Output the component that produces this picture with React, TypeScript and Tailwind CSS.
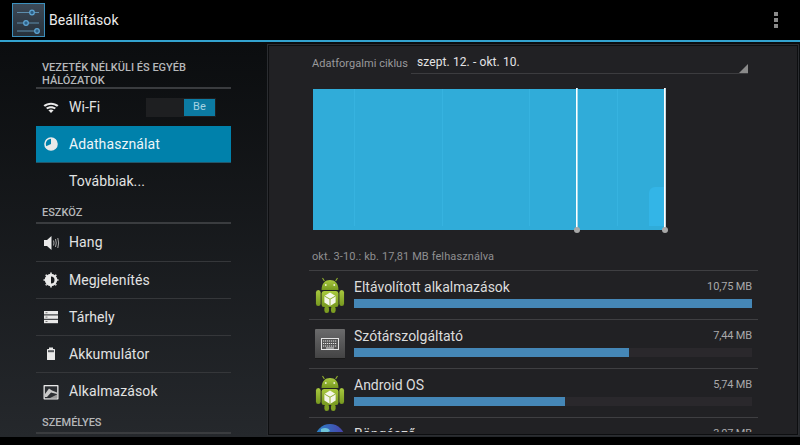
import React from "react";

function Android() {
  return (
    <svg width="30" height="36" viewBox="0 0 32 36" preserveAspectRatio="none" className="shrink-0">
      <defs>
        <linearGradient id="ag" x1="0" y1="0" x2="0" y2="1">
          <stop offset="0" stopColor="#a9c93f" />
          <stop offset="1" stopColor="#76981f" />
        </linearGradient>
      </defs>
      <path d="M10 4 L8 1 M22 4 L24 1" stroke="#8fae2e" strokeWidth="1.2" />
      <path d="M7 13 C7 6 11 3 16 3 C21 3 25 6 25 13 Z" fill="url(#ag)" />
      <circle cx="11.5" cy="8" r="1" fill="#e8efd0" />
      <circle cx="20.5" cy="8" r="1" fill="#e8efd0" />
      <rect x="7" y="14" width="18" height="16" rx="2.5" fill="url(#ag)" />
      <rect x="1" y="13" width="5" height="16" rx="2.5" fill="url(#ag)" />
      <rect x="26" y="13" width="5" height="16" rx="2.5" fill="url(#ag)" />
      <rect x="10" y="29" width="5" height="7" rx="2.5" fill="#7d9e22" />
      <rect x="17" y="29" width="5" height="7" rx="2.5" fill="#7d9e22" />
      <path d="M16 15.5 L22 19 V25.5 L16 29 L10 25.5 V19 Z" fill="#f4f6ea" />
      <path d="M10 19 L16 22.2 L22 19 M16 22.2 V29" stroke="#8fae2e" strokeWidth="1" fill="none" />
    </svg>
  );
}

function KeyboardIcon() {
  return (
    <svg width="30" height="30" viewBox="0 0 30 30" className="mt-[3px] shrink-0">
      <defs>
        <linearGradient id="kg" x1="0" y1="0" x2="0" y2="1">
          <stop offset="0" stopColor="#6b6b6c" />
          <stop offset="1" stopColor="#424243" />
        </linearGradient>
      </defs>
      <rect x="0" y="0" width="30" height="30" rx="1" fill="url(#kg)" />
      <rect x="0" y="29" width="30" height="1" fill="#1a1a1a" />
      <rect x="6.5" y="9.5" width="17" height="11" fill="#555" stroke="#e4e4e4" />
      <path d="M8 12h14M8 14.5h14M8 17h14" stroke="#e4e4e4" strokeWidth="1.2" strokeDasharray="1.2 .8" />
      <path d="M11 19h8" stroke="#e4e4e4" strokeWidth="1" />
    </svg>
  );
}

function Globe() {
  return (
    <svg width="30" height="30" viewBox="0 0 30 30" className="shrink-0">
      <defs>
        <linearGradient id="gg" x1="0" y1="0" x2="1" y2="0">
          <stop offset="0" stopColor="#2a86c9" />
          <stop offset="1" stopColor="#4a3fa8" />
        </linearGradient>
      </defs>
      <circle cx="15" cy="15" r="15" fill="url(#gg)" />
      <path d="M6 5 C10 3 14 4 15 7 C12 9 9 8 6 9 Z" fill="#6fc3d8" />
    </svg>
  );
}

const ICON = "#e9e9e9";
const icons: Record<string, React.ReactNode> = {
  wifi: (
    <svg width="16" height="16" viewBox="0 0 16 16">
      <path d="M0.5 5.2 C4.5 1.8 11.5 1.8 15.5 5.2 L14 6.8 C10.5 4 5.5 4 2 6.8 Z" fill={ICON} />
      <path d="M3 7.8 C6 5.6 10 5.6 13 7.8 L11.6 9.3 C9.4 7.8 6.6 7.8 4.4 9.3 Z" fill={ICON} />
      <path d="M5.4 10.3 C7 9.2 9 9.2 10.6 10.3 L8 13 Z" fill={ICON} />
    </svg>
  ),
  pie: (
    <svg width="16" height="16" viewBox="0 0 16 16">
      <circle cx="8" cy="8" r="6" fill="none" stroke={ICON} strokeWidth="1.6" />
      <path d="M8 8 L8 2 A6 6 0 1 1 2.6 10.6 Z" fill={ICON} />
    </svg>
  ),
  sound: (
    <svg width="17" height="16" viewBox="0 0 16 16">
      <path d="M0.5 5 H3.5 L8 1 V15 L3.5 11 H0.5 Z" fill={ICON} />
      <path d="M10 5.5 Q11 8 10 10.5 M12 4 Q13.5 8 12 12 M14.3 3 Q16 8 14.3 13" stroke="#aaa" strokeWidth="1" fill="none" />
    </svg>
  ),
  sun: (
    <svg width="16" height="16" viewBox="0 0 16 16">
      <circle cx="8" cy="8" r="6.2" fill={ICON} />
      <path d="M8 4.5 A3.5 3.5 0 0 1 8 11.5 Z" fill="#1a1c1f" />
      <path d="M8 0.5V15.5M.5 8H15.5M2.7 2.7L13.3 13.3M13.3 2.7L2.7 13.3" stroke={ICON} strokeWidth="1.6" strokeDasharray="1.6 12" />
    </svg>
  ),
  storage: (
    <svg width="16" height="16" viewBox="0 0 16 16">
      <rect x="1" y="2" width="14" height="3.4" fill={ICON} />
      <rect x="1" y="6.4" width="14" height="3.4" fill={ICON} />
      <rect x="1" y="10.8" width="14" height="3.4" fill={ICON} />
      <path d="M2.5 3.7h2M2.5 8.1h2M2.5 12.5h2" stroke="#777" strokeWidth="1" />
    </svg>
  ),
  battery: (
    <svg width="16" height="16" viewBox="0 0 16 16">
      <rect x="6" y="1.5" width="4" height="2" fill={ICON} />
      <rect x="4" y="3" width="8" height="11" rx="0.6" fill={ICON} />
      <rect x="5" y="4.2" width="6" height="2" fill="#55585c" />
    </svg>
  ),
  image: (
    <svg width="16" height="16" viewBox="0 0 16 16">
      <rect x="0.5" y="1" width="15" height="14.5" rx="0.8" fill={ICON} />
      <rect x="1.8" y="2.3" width="12.4" height="12" fill="#2b2e32" />
      <path d="M2 10 L6 4.5 L9 6.5 L14 8.5 V10 L8 8.5 L4 13 H2 Z" fill="#c9c9c9" />
      <path d="M7 14 L14 10.5 V14 Z" fill="#9a9a9a" />
    </svg>
  ),
};

function Section({ lines, h, pb }: { lines: string[]; h: string; pb: string }) {
  return (
    <div className={`${h} ${pb} flex flex-col justify-end border-b-2 border-[#3a3c3f] px-[6px] text-[11px] leading-[13px] font-medium whitespace-nowrap text-[#b6b8ba]`}>
      {lines.map((l) => (
        <div key={l}>{l}</div>
      ))}
    </div>
  );
}

function Row({ icon, label, h, active, line, children }: { icon?: string; label: string; h: string; active?: boolean; line?: boolean; children?: React.ReactNode }) {
  return (
    <div className={`${h} flex items-center whitespace-nowrap pl-[7px] text-[14px] tracking-[0.1px] ${active ? "bg-[#0081ab] text-[#eef6f9] border-b border-[#23566a]" : "text-[#e2e3e3]"} ${line ? "border-b border-[#35373a]" : ""}`}>
      <div className="flex w-[26px] shrink-0 items-center">{icon ? icons[icon] : null}</div>
      <span>{label}</span>
      {children}
    </div>
  );
}

function AppRow({ icon, name, size, pct }: { icon: React.ReactNode; name: string; size: string; pct: number }) {
  return (
    <div className="flex h-[49px] border-t border-[#3f3f42] px-[6px]">
      <div className="flex w-[39px] shrink-0 items-start pt-[6px]">{icon}</div>
      <div className="flex-1 pt-[6px]">
        <div className="flex h-[21px] items-center justify-between">
          <span className="text-[14px] text-[#dcdcdc]">{name}</span>
          <span className="text-[11px] tracking-[-0.15px] text-[#a9a9aa]">{size}</span>
        </div>
        <div className="mt-[1px] h-[9px] bg-[#2a282c]">
          <div className="h-full bg-[#4587b7]" style={{ width: `${pct}%` }} />
        </div>
      </div>
    </div>
  );
}

function Chart() {
  return (
    <div className="relative ml-[44px] h-[141px] w-[352px] bg-[#30acd9]">
      <div className="absolute left-[41px] top-0 h-[137px] w-px bg-[#36b3e0]" />
      <div className="absolute left-[129px] top-0 h-[137px] w-px bg-[#36b3e0]" />
      <div className="absolute left-[216px] top-0 h-[137px] w-px bg-[#36b3e0]" />
      <div className="absolute left-[304px] top-0 h-[137px] w-px bg-[#36b3e0]" />
      <div className="absolute bottom-[4px] left-[336px] h-[39px] w-[15px] rounded-tl-[6px] bg-[#33b5e7]" />
      <div className="absolute left-[263px] top-[-1px] h-[142px] w-[2px] border-l border-l-white bg-[#a8dcee]" />
      <div className="absolute left-[351px] top-[-1px] h-[142px] w-[2px] border-l border-l-white bg-[#c8d8de]" />
      <div className="absolute left-[261px] top-[138px] h-[6px] w-[6px] rounded-full bg-[#a8a8a8]" />
      <div className="absolute left-[349px] top-[138px] h-[6px] w-[6px] rounded-full bg-[#a8a8a8]" />
    </div>
  );
}

export default function App() {
  return (
    <div className="flex h-[445px] w-[800px] flex-col overflow-hidden bg-black font-['Roboto',sans-serif]">
      <header className="flex h-[40px] shrink-0 items-center justify-between pl-[12px] pr-[22px]">
        <div className="flex items-center">
          <svg width="33" height="34" viewBox="0 0 33 34">
            <defs>
              <linearGradient id="hg" x1="0" y1="0" x2="0" y2="1">
                <stop offset="0" stopColor="#3d4a58" />
                <stop offset="1" stopColor="#26303a" />
              </linearGradient>
            </defs>
            <rect x="0.5" y="0.5" width="32" height="33" fill="url(#hg)" stroke="#3c8fbc" />
            <path d="M5 10.5H27M5 21H27M5 29H27" stroke="#5d8dac" strokeWidth="1" transform="translate(0,-1)" />
            <circle cx="20" cy="9.5" r="2.3" fill="#2d5f86" stroke="#5fa6d4" strokeWidth="1.2" />
            <circle cx="14" cy="20" r="2.3" fill="#2d5f86" stroke="#5fa6d4" strokeWidth="1.2" />
            <circle cx="25" cy="28" r="2.3" fill="#2d5f86" stroke="#5fa6d4" strokeWidth="1.2" />
          </svg>
          <span className="ml-[4px] text-[14px] tracking-[0.1px] text-[#ececec]">Beállítások</span>
        </div>
        <div className="flex flex-col gap-[2px]">
          <div className="h-[4px] w-[4px] bg-[#8a8a8a]" />
          <div className="h-[4px] w-[4px] bg-[#8a8a8a]" />
          <div className="h-[4px] w-[4px] bg-[#8a8a8a]" />
        </div>
      </header>
      <div className="h-[2px] shrink-0 bg-[#33a3cf]" />
      <main className="flex h-[395px] shrink-0 bg-gradient-to-b from-[#0b0d0f] to-[#25282c]">
        <aside className="h-full w-[267px] shrink-0 overflow-hidden px-[36px]">
          <Section h="h-[47px]" pb="pb-0" lines={["VEZETÉK NÉLKÜLI ÉS EGYÉB", "HÁLÓZATOK"]} />
          <Row icon="wifi" label="Wi-Fi" h="h-[37px]">
            <div className="ml-auto mr-[15px] flex h-[19px] w-[70px] items-stretch bg-[#1e1f21] p-[1px]">
              <div className="flex-1" />
              <div className="flex w-[31px] items-center justify-center bg-[#0c7ba3] text-[11px] text-[#a7d3e2]">Be</div>
            </div>
          </Row>
          <Row icon="pie" label="Adathasználat" h="h-[37px]" active />
          <Row label="Továbbiak..." h="h-[37px]" />
          <Section h="h-[24px]" pb="pb-[3px]" lines={["ESZKÖZ"]} />
          <Row icon="sound" label="Hang" h="h-[38px]" line />
          <Row icon="sun" label="Megjelenítés" h="h-[37px]" line />
          <Row icon="storage" label="Tárhely" h="h-[37px]" line />
          <Row icon="battery" label="Akkumulátor" h="h-[37px]" line />
          <Row icon="image" label="Alkalmazások" h="h-[37px]" />
          <Section h="h-[24px]" pb="pb-[3px]" lines={["SZEMÉLYES"]} />
        </aside>
        <section className="mr-[1px] mt-[2px] h-[392px] flex-1 border border-[#2b2d31] bg-[#0d0e10] p-[1px]">
          <div className="h-full bg-[#212124]">
            <div className="h-[386px] overflow-hidden pl-[40px] pr-[39px]">
              <div className="flex h-[28px] items-end pl-[3px]">
                <span className="w-[99px] whitespace-nowrap pb-[2px] text-[11px] tracking-[0.05px] text-[#9a9a9c]">Adatforgalmi ciklus</span>
                <div className="relative flex h-[24px] w-[337px] items-center border-b border-[#3c3c3f] pl-[6px] text-[12px] tracking-[0.1px] text-[#e4e4e4]">
                  szept. 12. - okt. 10.
                  <div className="absolute bottom-0 right-0 h-0 w-0 border-b-[9px] border-l-[9px] border-b-[#8a8a8a] border-l-transparent" />
                </div>
              </div>
              <div className="-ml-[40px] pt-[15px]">
                <Chart />
              </div>
              <div className="flex h-[40px] items-end pb-[5px] pl-[3px] text-[11px] tracking-[0.1px] text-[#8f8f91]">okt. 3-10.: kb. 17,81 MB felhasználva</div>
              <AppRow icon={<Android />} name="Eltávolított alkalmazások" size="10,75 MB" pct={100} />
              <AppRow icon={<KeyboardIcon />} name="Szótárszolgáltató" size="7,44 MB" pct={69} />
              <AppRow icon={<Android />} name="Android OS" size="5,74 MB" pct={53} />
              <AppRow icon={<Globe />} name="Böngésző" size="3,07 MB" pct={29} />
            </div>
          </div>
        </section>
      </main>
    </div>
  );
}
